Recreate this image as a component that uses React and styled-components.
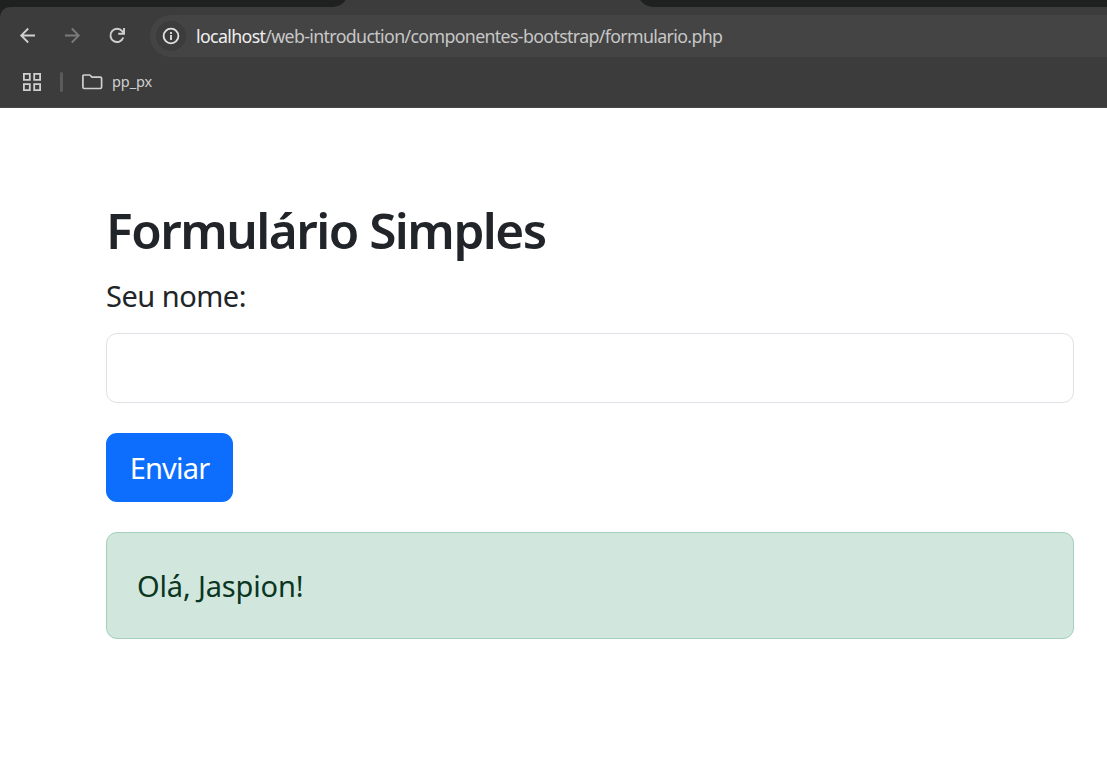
import React from 'react';
import styled, { createGlobalStyle } from 'styled-components';

const Global = createGlobalStyle`
  *, *::before, *::after { box-sizing: border-box; }
  html, body { margin: 0; background: #fff; }
  body { font-family: 'Noto Sans', 'Open Sans', sans-serif; overflow: hidden; }
`;

const Window = styled.div`
  display: flex;
  flex-direction: column;
  width: 100%;
  height: 765px;
`;

const Chrome = styled.header`
  background: #1f2120;
  height: 108px;
`;

const TabStrip = styled.div`
  display: flex;
  align-items: flex-end;
  justify-content: space-between;
  height: 7px;
  overflow: hidden;
  background: #3c3c3c;
`;

const InactiveTabs = styled.div`
  flex: none;
  width: ${p => p.$width};
  height: 30px;
  background: #1f2120;
  border-radius: ${p => (p.$side === 'left' ? '0 0 15px 0' : '0 0 0 15px')};
`;

const Toolbars = styled.div`
  height: 101px;
  background: #3c3c3c;
  border-top-left-radius: 10px;
  border-bottom: 1px solid #484848;
`;

const NavBar = styled.div`
  display: flex;
  align-items: center;
  padding: 8px 0 0 17px;
`;

const NavButton = styled.button`
  display: flex;
  width: 22px;
  height: 22px;
  margin: 0 22.5px 2px 0;
  padding: 0;
  border: 0;
  background: none;
  color: ${p => (p.$dim ? '#7b7b7b' : '#cfcfcf')};
`;

const AddressBar = styled.div`
  display: flex;
  flex: 1;
  align-items: center;
  height: 42px;
  margin-left: -0.5px;
  padding-left: 6px;
  border-radius: 21px 0 0 21px;
  background: #444;
`;

const SiteInfo = styled.span`
  display: flex;
  align-items: center;
  justify-content: center;
  width: 30px;
  height: 30px;
  margin-right: 10px;
  border-radius: 50%;
  background: #3c3c3c;
  color: #e3e3e3;
`;

const Url = styled.span`
  font-size: 17.8px;
  line-height: 24px;
  letter-spacing: -0.65px;
  white-space: nowrap;
  color: #c7c7c7;
`;

const Host = styled.span`
  color: #efefef;
`;

const Bookmarks = styled.div`
  display: flex;
  align-items: center;
  height: 50px;
  padding-left: 22px;
  color: #cfcfcf;
`;

const Divider = styled.span`
  width: 3px;
  height: 20px;
  margin: 0 19px 0 18px;
  border-radius: 2px;
  background: #5b5b5b;
`;

const BookmarkName = styled.span`
  margin-left: 9px;
  padding-bottom: 2px;
  font-size: 14.5px;
  line-height: 20px;
  letter-spacing: -0.1px;
`;

const Page = styled.main`
  display: flex;
  flex-direction: column;
  align-items: stretch;
  padding: 92px 33px 0 106px;
  color: #212529;
`;

const Title = styled.h2`
  margin: 0 0 14px;
  font-size: 49.5px;
  font-weight: 600;
  line-height: 60px;
  letter-spacing: -1.5px;
  white-space: nowrap;
`;

const Form = styled.form`
  display: flex;
  flex-direction: column;
  align-items: flex-start;
`;

const Label = styled.label`
  margin-bottom: 16px;
  font-size: 29px;
  line-height: 43px;
  letter-spacing: -0.5px;
`;

const Input = styled.input`
  width: 100%;
  height: 70px;
  margin: 0 0 30px;
  padding: 11px 23px;
  border: 1px solid #dee2e6;
  border-radius: 11px;
  background: #fff;
  color: inherit;
  font: inherit;
  font-size: 29px;
`;

const Submit = styled.button`
  width: 127px;
  height: 69px;
  padding: 0;
  border: 0;
  border-radius: 11px;
  background: #0d6efd;
  color: #fff;
  font-family: inherit;
  font-size: 29px;
  line-height: 45px;
  letter-spacing: -0.8px;
`;

const Alert = styled.div`
  height: 107px;
  margin-top: 30px;
  padding: 30px;
  border: 1px solid #a3cfbb;
  border-radius: 11px;
  background: #d1e7dd;
  color: #0a3622;
  font-size: 29px;
  line-height: 45px;
  letter-spacing: -0.15px;
`;

const ArrowIcon = ({ flip }) => (
  <svg width="22" height="22" viewBox="0 0 22 22" fill="none" stroke="currentColor" strokeWidth="1.8" aria-hidden="true">
    <g transform={flip ? 'translate(21 0) scale(-1 1)' : undefined}>
      <path d="M18 11.5H4.5M11.2 4.5l-7 7 7 7" />
    </g>
  </svg>
);

const ReloadIcon = () => (
  <svg width="22" height="22" viewBox="0 0 22 22" fill="none" stroke="currentColor" strokeWidth="1.9" aria-hidden="true">
    <path d="M17.3 13.5A6.6 6.6 0 1 1 16.2 7.2L17.6 9" />
    <path d="M18 4v5.8h-5.8" />
  </svg>
);

const InfoIcon = () => (
  <svg width="18" height="18" viewBox="0 0 18 18" fill="none" stroke="currentColor" strokeWidth="1.8" aria-hidden="true">
    <circle cx="9" cy="9" r="7.4" />
    <path d="M9 8v5M9 5v1.9" />
  </svg>
);

const AppsIcon = () => (
  <svg width="20" height="18" viewBox="0 0 20 18" fill="none" stroke="currentColor" strokeWidth="1.8" aria-hidden="true">
    <path d="M1.9 .9h5.9v5.9H1.9zM12.2 .9h5.9v5.9h-5.9zM1.9 11.2h5.9v5.9H1.9zM12.2 11.2h5.9v5.9h-5.9z" />
  </svg>
);

const FolderIcon = () => (
  <svg width="21" height="16" viewBox="0 0 21 16" fill="none" stroke="currentColor" strokeWidth="1.7" strokeLinejoin="round" aria-hidden="true">
    <path d="M1.9 1h5.9l2.2 2.2h8.2q1.4 0 1.4 1.4v8.5q0 1.4-1.4 1.4H2.3q-1.4 0-1.4-1.4V2q0-1 1-1z" />
  </svg>
);

export default function App() {
  return (
    <Window>
      <Global />
      <Chrome>
        <TabStrip>
          <InactiveTabs $side="left" $width="348px" />
          <InactiveTabs $side="right" $width="469px" />
        </TabStrip>
        <Toolbars>
          <NavBar>
            <NavButton aria-label="Voltar"><ArrowIcon /></NavButton>
            <NavButton $dim aria-label="Avançar"><ArrowIcon flip /></NavButton>
            <NavButton aria-label="Recarregar"><ReloadIcon /></NavButton>
            <AddressBar>
              <SiteInfo><InfoIcon /></SiteInfo>
              <Url><Host>localhost</Host>/web-introduction/componentes-bootstrap/formulario.php</Url>
            </AddressBar>
          </NavBar>
          <Bookmarks>
            <AppsIcon />
            <Divider />
            <FolderIcon />
            <BookmarkName>pp_px</BookmarkName>
          </Bookmarks>
        </Toolbars>
      </Chrome>
      <Page>
        <Title>Formulário Simples</Title>
        <Form onSubmit={e => e.preventDefault()}>
          <Label htmlFor="nome">Seu nome:</Label>
          <Input id="nome" type="text" />
          <Submit type="submit">Enviar</Submit>
        </Form>
        <Alert role="alert">Olá, Jaspion!</Alert>
      </Page>
    </Window>
  );
}
